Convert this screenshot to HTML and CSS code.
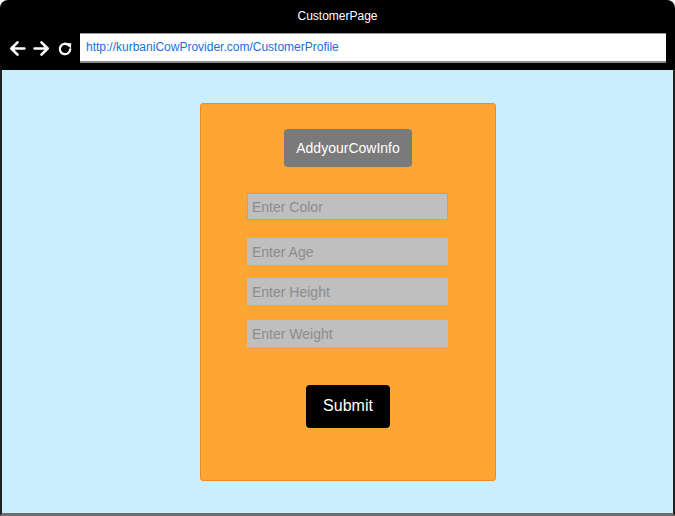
FILE: index.html
```html
<!DOCTYPE html>
<html>
<head>
<meta charset="utf-8">
<link rel="stylesheet" href="styles.css">
</head>
<body>
<div class="window">
  <div class="chrome">
    <div class="title">CustomerPage</div>
    <div class="navrow">
      <div class="navicons">
        <svg class="ico" width="17" height="17" viewBox="0 0 16 16"><path d="M14.5 8H2.5M8 2.2L2.2 8L8 13.8" fill="none" stroke="#fff" stroke-width="2.5" stroke-linecap="round" stroke-linejoin="round"/></svg>
        <svg class="ico" width="17" height="17" viewBox="0 0 16 16"><path d="M1.5 8H13.5M8 2.2L13.8 8L8 13.8" fill="none" stroke="#fff" stroke-width="2.5" stroke-linecap="round" stroke-linejoin="round"/></svg>
        <svg class="ico reload" width="16" height="16" viewBox="0 0 16 16"><path d="M13.2 8.5A5.2 5.2 0 1 1 11.6 4.2" fill="none" stroke="#fff" stroke-width="2.3" stroke-linecap="round"/><path d="M8.8 2.2L14.3 2.2L13.8 7.6Z" fill="#fff"/></svg>
      </div>
      <div class="url">http://kurbaniCowProvider.com/CustomerProfile</div>
    </div>
  </div>
  <div class="content">
    <div class="panel">
      <div class="header-btn">AddyourCowInfo</div>
      <div class="fields">
        <div class="field first">Enter Color</div>
        <div class="field second">Enter Age</div>
        <div class="field">Enter Height</div>
        <div class="field last">Enter Weight</div>
      </div>
      <div class="submit">Submit</div>
    </div>
  </div>
</div>
</body>
</html>
```
FILE: styles.css
```css
* { box-sizing: border-box; }
html, body { margin: 0; padding: 0; background: #fff; }
body { font-family: "Liberation Sans", Arial, sans-serif; }
.window {
  width: 675px;
  height: 516px;
  display: flex;
  flex-direction: column;
}
.chrome {
  background: #000;
  height: 70px;
  border-radius: 8px 8px 0 0;
  display: flex;
  flex-direction: column;
}
.title {
  color: #fff;
  font-size: 12px;
  text-align: center;
  padding-top: 9px;
  height: 33px;
}
.navrow {
  display: flex;
  align-items: center;
  padding-left: 9px;
}
.navicons {
  display: flex;
  align-items: center;
  gap: 7px;
  width: 71px;
  padding-top: 1px;
}
.ico { display: block; }
.url {
  width: 586px;
  height: 30px;
  background: #fff;
  border-top: 1px solid #9a9a9a;
  border-bottom: 2px solid #8a8a8a;
  color: #1a6fe0;
  font-size: 12px;
  line-height: 27px;
  padding-left: 6px;
}
.content {
  flex: 1;
  background: #c9eefd;
  border-left: 2px solid #222;
  border-right: 2px solid #222;
  border-bottom: 3px solid #6e6e6e;
  padding-top: 33px;
  padding-left: 198px;
}
.panel {
  width: 296px;
  height: 378px;
  background: #ffa533;
  border: 1px solid #f0892c;
  border-radius: 3px;
  display: flex;
  flex-direction: column;
  align-items: center;
  padding-top: 25px;
}
.header-btn {
  background: #7a7a7a;
  color: #fff;
  font-size: 14px;
  width: 128px;
  height: 38px;
  line-height: 38px;
  text-align: center;
  border-radius: 4px;
}
.fields {
  margin-top: 26px;
  display: flex;
  flex-direction: column;
  margin-left: -1px;
}
.field {
  width: 201px;
  height: 27px;
  background: #bfbfbf;
  color: #8c8c8c;
  font-size: 14px;
  line-height: 28px;
  padding-left: 5px;
}
.field.first {
  border: 1px solid #a8a8a8;
  line-height: 26px;
  padding-left: 4px;
}
.field.second { margin-top: 18px; }
.field.second + .field { margin-top: 13px; }
.field.last { margin-top: 15px; }
.submit {
  margin-top: 38px;
  background: #000;
  color: #fff;
  font-size: 16px;
  width: 84px;
  height: 43px;
  line-height: 42px;
  text-align: center;
  border-radius: 4px;
}
```
